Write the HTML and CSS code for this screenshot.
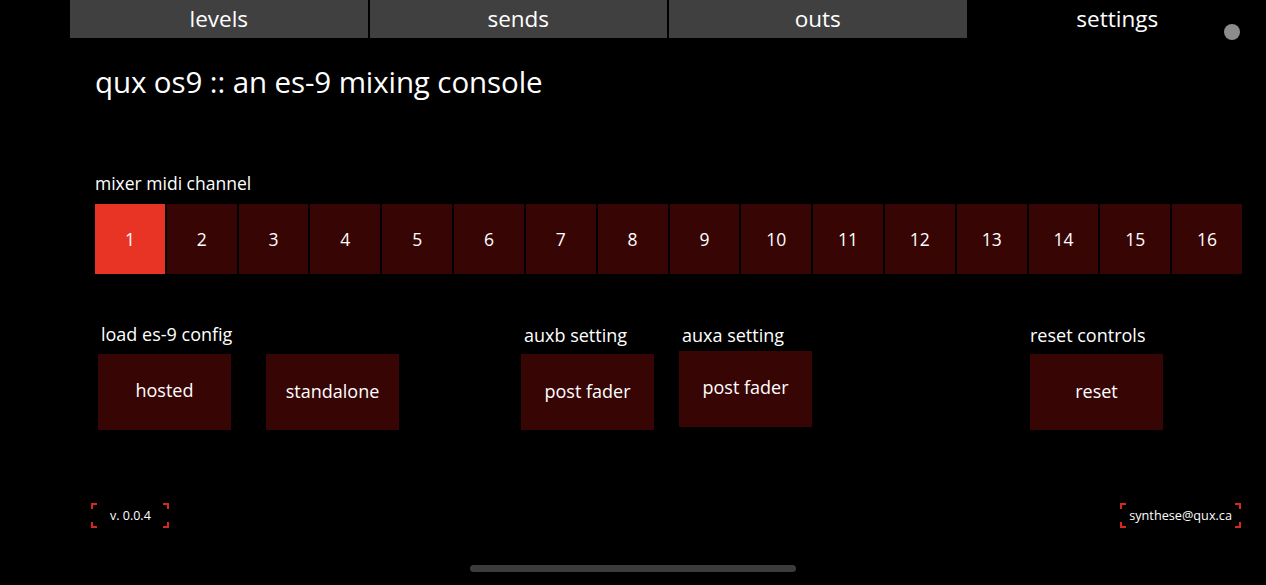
FILE: index.html
```html
<!DOCTYPE html>
<html>
<head>
<meta charset="utf-8">
<link rel="stylesheet" href="styles.css">
</head>
<body>
<div class="app">
  <nav class="tabs">
    <div class="tab">levels</div>
    <div class="tab">sends</div>
    <div class="tab">outs</div>
    <div class="tab active">settings</div>
  </nav>
  <div class="dot"></div>
  <main class="content">
    <h1 class="title">qux os9 :: an es-9 mixing console</h1>
    <section class="channel">
      <div class="label">mixer midi channel</div>
      <div class="channel-row">
        <div class="ch active">1</div>
        <div class="ch">2</div>
        <div class="ch">3</div>
        <div class="ch">4</div>
        <div class="ch">5</div>
        <div class="ch">6</div>
        <div class="ch">7</div>
        <div class="ch">8</div>
        <div class="ch">9</div>
        <div class="ch">10</div>
        <div class="ch">11</div>
        <div class="ch">12</div>
        <div class="ch">13</div>
        <div class="ch">14</div>
        <div class="ch">15</div>
        <div class="ch">16</div>
      </div>
    </section>
    <section class="options">
      <div class="group g-load">
        <div class="label glabel">load es-9 config</div>
        <div class="btns">
          <div class="btn btn-hosted">hosted</div>
          <div class="btn">standalone</div>
        </div>
      </div>
      <div class="group g-auxb">
        <div class="label glabel lower">auxb setting</div>
        <div class="btns"><div class="btn">post fader</div></div>
      </div>
      <div class="group g-auxa">
        <div class="label glabel lower">auxa setting</div>
        <div class="btns"><div class="btn btn-hosted">post fader</div></div>
      </div>
      <div class="group g-reset">
        <div class="label glabel lower flush">reset controls</div>
        <div class="btns"><div class="btn">reset</div></div>
      </div>
    </section>
  </main>
  <footer class="footer">
    <div class="badge">v. 0.0.4</div>
    <div class="badge badge-mail">synthese@qux.ca</div>
  </footer>
  <div class="home-indicator"></div>
</div>
</body>
</html>
```

FILE: styles.css
```css
* { box-sizing: border-box; }
html, body {
  margin: 0;
  padding: 0;
  background: #000;
}
body {
  width: 1266px;
  height: 585px;
  overflow: hidden;
  color: #fff;
  font-family: "Open Sans", "Noto Sans", "DejaVu Sans", sans-serif;
}
.app {
  position: relative;
  width: 1266px;
  height: 585px;
}
.tabs {
  display: flex;
  gap: 2px;
  margin-left: 70px;
  height: 38px;
}
.tab {
  flex: 1;
  background: #404040;
  color: #fff;
  font-size: 22.5px;
  line-height: 38px;
  text-align: center;
}
.tab.active {
  background: #000;
}
.dot {
  position: absolute;
  left: 1224px;
  top: 24px;
  width: 16px;
  height: 16px;
  border-radius: 50%;
  background: #8c8c8c;
}
.content {
  padding-left: 95px;
}
.title {
  margin: 26px 0 0 0;
  font-size: 29.5px;
  font-weight: 400;
  line-height: 36px;
  letter-spacing: -0.1px;
}
.label {
  font-size: 18px;
  line-height: 22px;
}
.channel {
  margin-top: 72px;
}
.channel .label {
  font-size: 17.5px;
}
.channel-row {
  display: flex;
  gap: 2px;
  margin-top: 10px;
  width: 1147px;
}
.ch {
  flex: 1;
  height: 70px;
  background: #380505;
  font-size: 17.5px;
  display: flex;
  align-items: center;
  justify-content: center;
}
.ch.active {
  background: #e83425;
}
.options {
  display: flex;
  align-items: flex-start;
  margin-top: 49px;
}
.group {
  display: flex;
  flex-direction: column;
}
.g-load { margin-left: 3px; }
.g-auxb { margin-left: 122px; }
.g-auxa { margin-left: 25px; }
.g-reset { margin-left: 218px; }
.glabel {
  padding-left: 3px;
  height: 22px;
}
.glabel.lower { margin-top: 1px; }
.glabel.flush { padding-left: 0; }
.btns {
  display: flex;
  gap: 35px;
  margin-top: 9px;
}
.g-auxb .btns, .g-reset .btns { margin-top: 8px; }
.g-auxa .btns { margin-top: 5px; }
.btn {
  width: 133px;
  height: 76px;
  background: #380505;
  font-size: 18px;
  padding-bottom: 2px;
  display: flex;
  align-items: center;
  justify-content: center;
}
.btn-hosted {
  padding-bottom: 5px;
}
.footer {
  display: flex;
  justify-content: space-between;
  padding: 0 25px 0 91px;
  margin-top: 73px;
}
.badge {
  height: 25px;
  padding: 0 18px 0 19px;
  font-size: 12.5px;
  line-height: 25px;
  color: #fff;
  --c: #d4291d;
  background:
    linear-gradient(var(--c), var(--c)) left top / 2px 6px no-repeat,
    linear-gradient(var(--c), var(--c)) left top / 6px 2px no-repeat,
    linear-gradient(var(--c), var(--c)) right top / 2px 6px no-repeat,
    linear-gradient(var(--c), var(--c)) right top / 6px 2px no-repeat,
    linear-gradient(var(--c), var(--c)) left bottom / 2px 6px no-repeat,
    linear-gradient(var(--c), var(--c)) left bottom / 6px 2px no-repeat,
    linear-gradient(var(--c), var(--c)) right bottom / 2px 6px no-repeat,
    linear-gradient(var(--c), var(--c)) right bottom / 6px 2px no-repeat;
}
.badge-mail {
  padding: 0 9px 0 9px;
  font-size: 12.7px;
}
.home-indicator {
  position: absolute;
  left: 470px;
  top: 565px;
  width: 326px;
  height: 7px;
  border-radius: 4px;
  background: #3c3c3c;
}
```
